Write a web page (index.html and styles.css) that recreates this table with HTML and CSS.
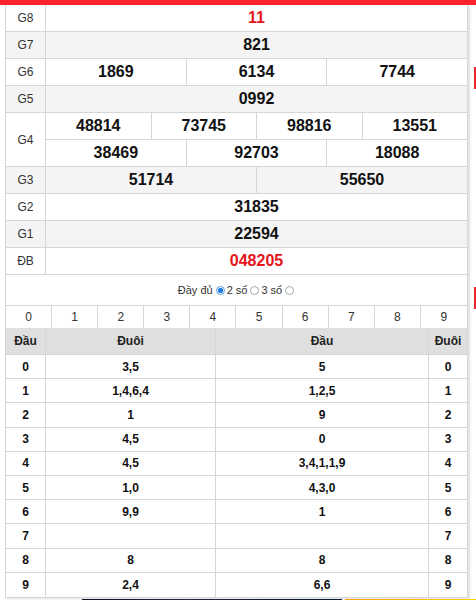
FILE: index.html
```html
<!DOCTYPE html>
<html lang="vi">
<head>
<meta charset="utf-8">
<title>KQXS</title>
<link rel="stylesheet" href="styles.css">
</head>
<body>
<div class="topbar"></div>
<div class="kq">
  <div class="row"><div class="lbl">G8</div><div class="cells"><div class="c red">11</div></div></div>
  <div class="row alt"><div class="lbl">G7</div><div class="cells"><div class="c">821</div></div></div>
  <div class="row"><div class="lbl">G6</div><div class="cells"><div class="c">1869</div><div class="c">6134</div><div class="c">7744</div></div></div>
  <div class="row alt"><div class="lbl">G5</div><div class="cells"><div class="c">0992</div></div></div>
  <div class="row g4"><div class="lbl">G4</div>
    <div class="stack">
      <div class="sub"><div class="c">48814</div><div class="c">73745</div><div class="c">98816</div><div class="c">13551</div></div>
      <div class="sub"><div class="c">38469</div><div class="c">92703</div><div class="c">18088</div></div>
    </div>
  </div>
  <div class="row alt"><div class="lbl">G3</div><div class="cells"><div class="c">51714</div><div class="c">55650</div></div></div>
  <div class="row"><div class="lbl">G2</div><div class="cells"><div class="c">31835</div></div></div>
  <div class="row alt"><div class="lbl">G1</div><div class="cells"><div class="c">22594</div></div></div>
  <div class="row"><div class="lbl">ĐB</div><div class="cells"><div class="c red">048205</div></div></div>

  <div class="opts">
    <span>Đầy đủ</span><span class="rd on"></span>
    <span>2 số</span><span class="rd"></span>
    <span>3 số</span><span class="rd"></span>
  </div>

  <div class="nums">
    <div>0</div><div>1</div><div>2</div><div>3</div><div>4</div><div>5</div><div>6</div><div>7</div><div>8</div><div>9</div>
  </div>

  <div class="lt">
    <div class="lr head"><div>Đầu</div><div>Đuôi</div><div>Đầu</div><div>Đuôi</div></div>
    <div class="lr"><div>0</div><div>3,5</div><div>5</div><div>0</div></div>
    <div class="lr"><div>1</div><div>1,4,6,4</div><div>1,2,5</div><div>1</div></div>
    <div class="lr"><div>2</div><div>1</div><div>9</div><div>2</div></div>
    <div class="lr"><div>3</div><div>4,5</div><div>0</div><div>3</div></div>
    <div class="lr"><div>4</div><div>4,5</div><div>3,4,1,1,9</div><div>4</div></div>
    <div class="lr"><div>5</div><div>1,0</div><div>4,3,0</div><div>5</div></div>
    <div class="lr"><div>6</div><div>9,9</div><div>1</div><div>6</div></div>
    <div class="lr"><div>7</div><div></div><div></div><div>7</div></div>
    <div class="lr"><div>8</div><div>8</div><div>8</div><div>8</div></div>
    <div class="lr"><div>9</div><div>2,4</div><div>6,6</div><div>9</div></div>
  </div>
</div>
<div class="strip"><div class="dark"></div><div class="yellow"></div></div>
<div class="side s1"></div>
<div class="side s2"></div>
</body>
</html>
```

FILE: styles.css
```css
* { box-sizing: border-box; }
html, body { margin: 0; padding: 0; }
body {
  font-family: "Liberation Sans", Arial, sans-serif;
  background: #fff;
  color: #000;
  width: 476px;
  height: 600px;
  overflow: hidden;
  position: relative;
}
.topbar { height: 5px; background: #f6232e; }

.kq {
  margin-left: 5px;
  width: 463px;
  border: 1px solid #d6d6d6;
  border-top: 0;
  box-shadow: 2px 1px 2px rgba(0,0,0,0.12);
  background: #fff;
}

.row {
  display: flex;
  height: 27px;
  border-bottom: 1px solid #d6d6d6;
}
.row.alt { background: #f4f4f4; }
.row.g4 { height: 54px; }

.lbl {
  width: 40px;
  flex: none;
  border-right: 1px solid #d6d6d6;
  display: flex;
  align-items: center;
  justify-content: center;
  font-size: 12px;
  color: #333;
}
.cells { flex: 1; display: flex; }
.stack { flex: 1; display: flex; flex-direction: column; }
.sub { display: flex; height: 27px; border-bottom: 1px solid #d6d6d6; }
.sub:last-child { border-bottom: 0; flex: 1; }

.c {
  flex: 1 1 0;
  display: flex;
  align-items: center;
  justify-content: center;
  font-weight: bold;
  font-size: 16px;
  color: #111;
  border-right: 1px solid #d6d6d6;
}
.c:last-child { border-right: 0; }
.c.red { color: #e4141b; }

.opts {
  height: 30px;
  display: flex;
  align-items: center;
  justify-content: center;
  font-size: 11px;
  color: #333;
  padding-left: 1px;
}
.rd {
  width: 9px;
  height: 9px;
  border: 1px solid #a5a5a5;
  border-radius: 50%;
  display: inline-block;
  margin: 0 2px 0 3px;
  background: #fff;
}
.rd.on {
  border-color: #5b9be0;
  background: radial-gradient(circle, #1f7fe6 0, #1f7fe6 2.3px, #fff 3px);
}

.nums {
  display: grid;
  grid-template-columns: repeat(10, 1fr);
  border-top: 1px solid #d6d6d6;
  height: 23px;
}
.nums div {
  display: flex;
  align-items: center;
  justify-content: center;
  font-size: 12px;
  color: #333;
  border-right: 1px solid #d6d6d6;
}
.nums div:last-child { border-right: 0; }

.lr {
  display: grid;
  grid-template-columns: 40px 170px 1fr 38px;
  height: 24.2px;
  border-bottom: 1px solid #d6d6d6;
}
.lr:last-child { border-bottom: 0; }
.lr div {
  display: flex;
  align-items: center;
  justify-content: center;
  font-size: 12px;
  font-weight: bold;
  color: #111;
  border-right: 1px solid #d6d6d6;
}
.lr div:last-child { border-right: 0; }
.lr.head {
  height: 27px;
  background: #dfdfdf;
}
.lr.head div { font-size: 12px; color: #222; }

.strip {
  display: flex;
  height: 3px;
  margin-top: 1px;
  padding-left: 82px;
}
.strip .dark {
  width: 260px;
  background: linear-gradient(90deg, #0c0f22, #2a2446 40%, #101a3a 70%, #0d1b3c);
}
.strip .yellow {
  flex: 1;
  margin-left: 3px;
  background: linear-gradient(90deg, #f6a20a, #ffd200);
}

.side {
  position: absolute;
  left: 474px;
  width: 2px;
  background: #e5262e;
}
.s1 { top: 67px; height: 22px; }
.s2 { top: 287px; height: 22px; }
```
